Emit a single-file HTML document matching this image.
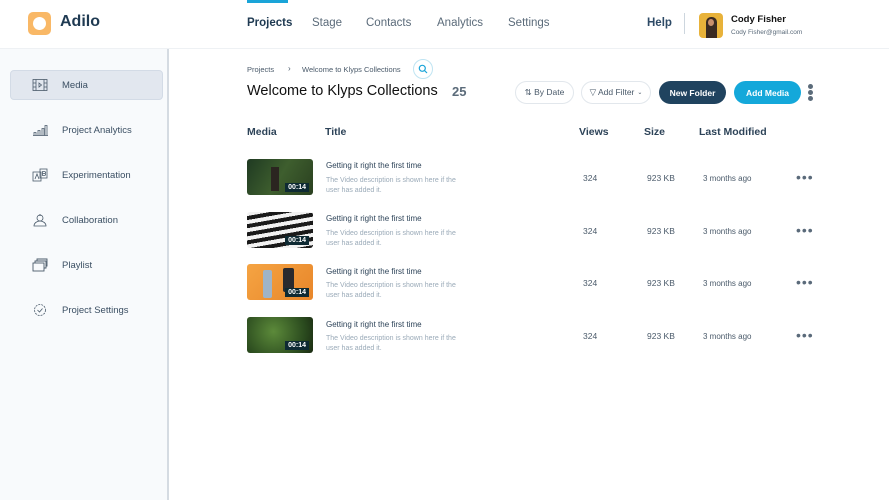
<!DOCTYPE html>
<html><head><meta charset="utf-8"><style>
*{margin:0;padding:0;box-sizing:border-box}
body{width:889px;height:500px;overflow:hidden;background:#fff;font-family:"Liberation Sans",sans-serif;color:#1f3a52;position:relative}
.a{position:absolute;white-space:nowrap}
.hdr{position:absolute;left:0;top:0;width:889px;height:49px;border-bottom:1px solid #eef1f4;background:#fff}
.side{position:absolute;left:0;top:49px;width:169px;height:451px;background:#f8fafc;border-right:2px solid #d5dbe2}
.nav{font-size:11.5px;color:#5b6b7a}
.si{font-size:9.5px;color:#3b4f63}
.ic{position:absolute;left:32px;width:16px;height:14px}
.btn{position:absolute;height:23px;border-radius:12px;font-size:8.5px;display:flex;align-items:center;justify-content:center}
.th{font-size:10.5px;font-weight:bold;color:#2d4358}
.thumb{position:absolute;left:247px;width:66px;height:36px;border-radius:3px;overflow:hidden}
.dur{position:absolute;right:4px;bottom:3px;background:#0e2a33;color:#fff;font-size:7px;font-weight:bold;padding:1px 3px}
.t1{font-size:8px;color:#2d4358}
.t2{font-size:7px;color:#9aaab8;line-height:10px}
.cell{font-size:8.5px;color:#4a5a6a}
.dots{font-size:14px;color:#5a6a7a;letter-spacing:1px}
</style></head><body>
<div class="hdr"></div>
<div class="a" style="left:28px;top:12px;width:23px;height:23px;border-radius:5px;background:#f9b866"></div>
<div class="a" style="left:33px;top:17px;width:13px;height:13px;border-radius:50%;background:#fff"></div>
<div class="a" style="left:60px;top:13px;font-size:16px;font-weight:bold;color:#1f3a52">Adilo</div>
<div class="a" style="left:247px;top:0;width:41px;height:3px;background:#1aa4d8"></div>
<div class="a nav" style="left:247px;top:17px;color:#1f3a52;font-weight:bold">Projects</div>
<div class="a nav" style="left:312px;top:17px">Stage</div>
<div class="a nav" style="left:366px;top:17px">Contacts</div>
<div class="a nav" style="left:437px;top:17px">Analytics</div>
<div class="a nav" style="left:508px;top:17px">Settings</div>
<div class="a" style="left:647px;top:17px;font-size:11.5px;font-weight:bold;color:#2d4a66">Help</div>
<div class="a" style="left:684px;top:13px;width:1px;height:21px;background:#cdd6de"></div>
<div class="a" style="left:699px;top:13px;width:24px;height:25px;border-radius:4px;background:#e8b23a;overflow:hidden"><div style="position:absolute;left:7px;top:4px;width:11px;height:21px;border-radius:5px 5px 0 0;background:#3a2a22"></div><div style="position:absolute;left:9px;top:6px;width:6px;height:7px;border-radius:50%;background:#c98f6c"></div></div>
<div class="a" style="left:731px;top:14px;font-size:9.5px;font-weight:bold;color:#111">Cody Fisher</div>
<div class="a" style="left:731px;top:29px;font-size:6.5px;color:#5b6b7a">Cody Fisher@gmail.com</div>

<div class="side"></div>
<div class="a" style="left:10px;top:70px;width:153px;height:30px;border-radius:4px;background:#e2e7ef;border:1px solid #d3dbe6"></div>
<svg class="ic" style="top:78px" viewBox="0 0 16 14" fill="none" stroke="#4a5a6a" stroke-width="0.8"><rect x="1" y="1.5" width="14" height="11"/><path d="M4 1.5v11M12 1.5v11M1 5h3M1 9h3M12 5h3M12 9h3M7 5l2.5 2-2.5 2z"/></svg>
<div class="a si" style="left:62px;top:80px">Media</div>
<svg class="ic" style="top:123px" viewBox="0 0 16 14" fill="none" stroke="#4a5a6a" stroke-width="0.8"><path d="M1 12.5h15M2 12.5v-3h2v3M6 12.5v-5h2v5M10 12.5v-7h2v7M13 12.5v-10h2v10"/></svg>
<div class="a si" style="left:62px;top:125px">Project Analytics</div>
<svg class="ic" style="top:168px" viewBox="0 0 16 14" fill="none" stroke="#4a5a6a" stroke-width="0.8"><rect x="1" y="4" width="8" height="9"/><rect x="8" y="1" width="7" height="9"/><path d="M3 11l2-5 2 5M10.5 3.5v4h2a1 1 0 000-2h-2 2a1 1 0 000-2z"/></svg>
<div class="a si" style="left:62px;top:170px">Experimentation</div>
<svg class="ic" style="top:213px" viewBox="0 0 16 14" fill="none" stroke="#4a5a6a" stroke-width="0.8"><circle cx="8" cy="5" r="3"/><path d="M2 13c0-3 3-5 6-5s6 2 6 5zM8 1v2"/></svg>
<div class="a si" style="left:62px;top:215px">Collaboration</div>
<svg class="ic" style="top:258px" viewBox="0 0 16 14" fill="none" stroke="#4a5a6a" stroke-width="0.9"><rect x="1" y="5" width="11" height="8"/><path d="M3 5V3h11v7h-2M5 3V1h10v7h-1"/></svg>
<div class="a si" style="left:62px;top:260px">Playlist</div>
<svg class="ic" style="top:303px" viewBox="0 0 16 14" fill="none" stroke="#4a5a6a" stroke-width="0.8"><circle cx="8" cy="7" r="5.5" stroke-dasharray="2 1"/><path d="M5.5 7l2 2 3-3.5"/></svg>
<div class="a si" style="left:62px;top:305px">Project Settings</div>

<div class="a" style="left:247px;top:65px;font-size:7.5px;color:#4a5a6a">Projects</div>
<div class="a" style="left:288px;top:64px;font-size:8px;color:#4a5a6a">›</div>
<div class="a" style="left:302px;top:65px;font-size:7.5px;color:#4a5a6a">Welcome to Klyps Collections</div>
<div class="a" style="left:413px;top:59px;width:20px;height:20px;border-radius:50%;border:1px solid #bfe4f2"></div>
<svg class="a" style="left:418px;top:64px" width="10" height="10" viewBox="0 0 10 10" fill="none" stroke="#1aa4d8" stroke-width="1.2"><circle cx="4.3" cy="4.3" r="3"/><path d="M6.5 6.5L9 9"/></svg>
<div class="a" style="left:247px;top:83px;font-size:14.5px;color:#111">Welcome to Klyps Collections</div>
<div class="a" style="left:452px;top:84px;font-size:13px;font-weight:bold;color:#5b6b7a">25</div>

<div class="btn" style="left:515px;top:81px;width:59px;border:1px solid #e2e7ec;color:#4a5a6a">⇅ By Date</div>
<div class="btn" style="left:581px;top:81px;width:70px;border:1px solid #e2e7ec;color:#4a5a6a">▽ Add Filter <span style="font-size:6px;margin-left:3px">⌄</span></div>
<div class="btn" style="left:659px;top:81px;width:67px;background:#20435f;color:#fff;font-weight:bold">New Folder</div>
<div class="btn" style="left:734px;top:81px;width:67px;background:#14a8da;color:#fff;font-weight:bold">Add Media</div>
<div class="a" style="left:808px;top:84px;width:5px;height:5px;border-radius:50%;background:#5b6b7a"></div>
<div class="a" style="left:808px;top:90px;width:5px;height:5px;border-radius:50%;background:#5b6b7a"></div>
<div class="a" style="left:808px;top:96px;width:5px;height:5px;border-radius:50%;background:#5b6b7a"></div>

<div class="a th" style="left:247px;top:126px">Media</div>
<div class="a th" style="left:325px;top:126px">Title</div>
<div class="a th" style="left:579px;top:126px">Views</div>
<div class="a th" style="left:644px;top:126px">Size</div>
<div class="a th" style="left:699px;top:126px">Last Modified</div>

<div class="thumb" style="top:159px;background:linear-gradient(120deg,#1f3a22,#3e5e2e 50%,#2a4020)"><div style="position:absolute;left:24px;top:8px;width:8px;height:24px;background:#2b2520"></div><div class="dur">00:14</div></div>
<div class="thumb" style="top:212px;background:repeating-linear-gradient(170deg,#f2f2f2 0 4px,#1a1a1a 4px 8px)"><div class="dur">00:14</div></div>
<div class="thumb" style="top:264px;background:linear-gradient(135deg,#f5a443,#e8862a)"><div style="position:absolute;left:16px;top:6px;width:9px;height:28px;background:#9fb4c8;border-radius:2px"></div><div style="position:absolute;left:36px;top:4px;width:11px;height:24px;background:#2a2a2e;border-radius:2px"></div><div class="dur">00:14</div></div>
<div class="thumb" style="top:317px;background:radial-gradient(circle at 40% 40%,#5c8a3a,#2a4a1e 70%,#1a2a12)"><div class="dur">00:14</div></div>

<div class="a t1" style="left:326px;top:161px">Getting it right the first time</div>
<div class="a t2" style="left:326px;top:176px">The Video description is shown here if the<br>user has added it.</div>
<div class="a t1" style="left:326px;top:214px">Getting it right the first time</div>
<div class="a t2" style="left:326px;top:229px">The Video description is shown here if the<br>user has added it.</div>
<div class="a t1" style="left:326px;top:267px">Getting it right the first time</div>
<div class="a t2" style="left:326px;top:281px">The Video description is shown here if the<br>user has added it.</div>
<div class="a t1" style="left:326px;top:320px">Getting it right the first time</div>
<div class="a t2" style="left:326px;top:334px">The Video description is shown here if the<br>user has added it.</div>

<div class="a cell" style="left:583px;top:173px">324</div><div class="a cell" style="left:647px;top:173px">923 KB</div><div class="a cell" style="left:703px;top:174px;font-size:8px">3 months ago</div><div class="a dots" style="left:796px;top:169px">•••</div>
<div class="a cell" style="left:583px;top:226px">324</div><div class="a cell" style="left:647px;top:226px">923 KB</div><div class="a cell" style="left:703px;top:227px;font-size:8px">3 months ago</div><div class="a dots" style="left:796px;top:222px">•••</div>
<div class="a cell" style="left:583px;top:278px">324</div><div class="a cell" style="left:647px;top:278px">923 KB</div><div class="a cell" style="left:703px;top:279px;font-size:8px">3 months ago</div><div class="a dots" style="left:796px;top:274px">•••</div>
<div class="a cell" style="left:583px;top:331px">324</div><div class="a cell" style="left:647px;top:331px">923 KB</div><div class="a cell" style="left:703px;top:332px;font-size:8px">3 months ago</div><div class="a dots" style="left:796px;top:327px">•••</div>
</body></html>
